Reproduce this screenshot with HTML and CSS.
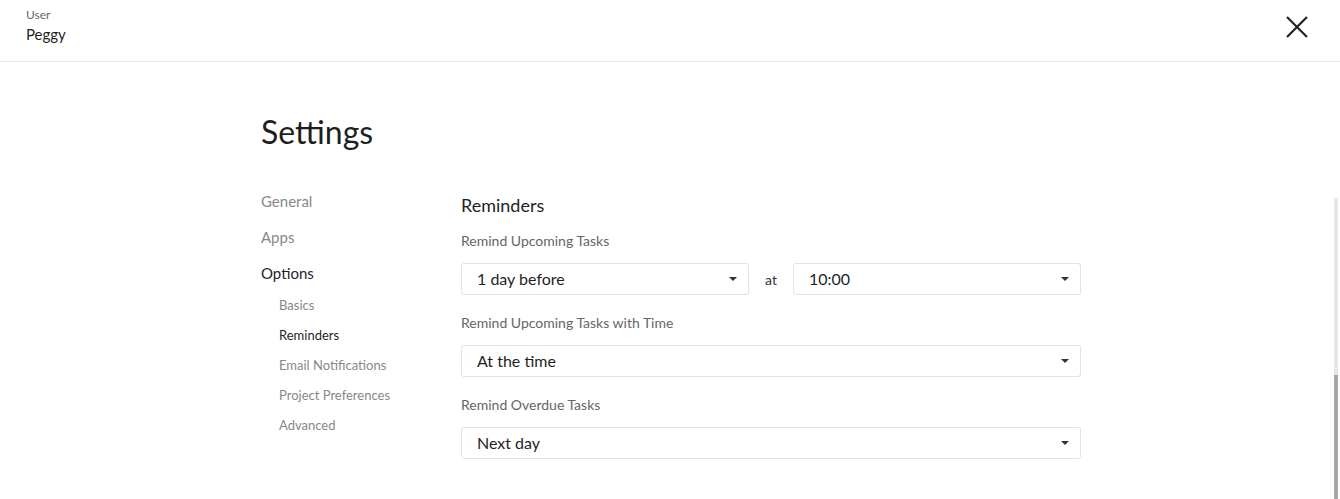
FILE: index.html
```html
<!DOCTYPE html>
<html>
<head>
<meta charset="utf-8">
<link rel="stylesheet" href="styles.css">
</head>
<body>
<header class="topbar">
  <div class="user">
    <div class="user-label">User</div>
    <div class="user-name">Peggy</div>
  </div>
  <button class="close" aria-label="Close">
    <svg width="24" height="24" viewBox="0 0 24 24"><path d="M2 2 L22 22 M22 2 L2 22" stroke="#222" stroke-width="2.2" fill="none"/></svg>
  </button>
</header>
<main class="page">
  <h1 class="title">Settings</h1>
  <div class="layout">
    <nav class="nav">
      <div class="nav-item">General</div>
      <div class="nav-item">Apps</div>
      <div class="nav-item active">Options</div>
      <div class="sub">
        <div class="sub-item">Basics</div>
        <div class="sub-item active">Reminders</div>
        <div class="sub-item">Email Notifications</div>
        <div class="sub-item">Project Preferences</div>
        <div class="sub-item">Advanced</div>
      </div>
    </nav>
    <section class="content">
      <h2 class="section-title">Reminders</h2>
      <div class="label">Remind Upcoming Tasks</div>
      <div class="row">
        <div class="select"><span>1 day before</span><i class="caret"></i></div>
        <span class="at">at</span>
        <div class="select"><span>10:00</span><i class="caret"></i></div>
      </div>
      <div class="label">Remind Upcoming Tasks with Time</div>
      <div class="row">
        <div class="select"><span>At the time</span><i class="caret"></i></div>
      </div>
      <div class="label">Remind Overdue Tasks</div>
      <div class="row">
        <div class="select"><span>Next day</span><i class="caret"></i></div>
      </div>
    </section>
  </div>
</main>
<div class="scrollbar"><div class="thumb"></div></div>
</body>
</html>
```
FILE: styles.css
```css
* { box-sizing: border-box; }
html, body { margin: 0; padding: 0; }
body {
  font-family: Lato, "Open Sans", sans-serif;
  color: #1f1f1f;
  background: #fff;
  width: 1340px;
  height: 499px;
  overflow: hidden;
}
.topbar {
  height: 62px;
  border-bottom: 1px solid #e8e8e8;
  display: flex;
  justify-content: space-between;
  align-items: flex-start;
  padding: 0 31px 0 26px;
}
.user { padding-top: 7px; }
.user-label { font-size: 12px; color: #666; line-height: 15px; }
.user-name { font-size: 15px; color: #1f1f1f; line-height: 22px; margin-top: 1px; }
.close {
  border: 0; background: none; padding: 0; margin-top: 15px; width: 24px; height: 24px; cursor: pointer;
}
.close svg { display: block; }
.page { padding-left: 261px; }
.title {
  font-size: 32px; font-weight: 400; margin: 0; padding-top: 50px; line-height: 40px; color: #1f1f1f;
}
.layout { display: flex; margin-top: 39px; }
.nav { width: 200px; }
.nav-item { font-size: 15px; color: #888; line-height: 20px; margin-bottom: 16px; }
.nav-item.active { color: #1f1f1f; margin-bottom: 13px; }
.sub { padding-left: 18px; }
.sub-item { font-size: 13px; color: #888; line-height: 18px; margin-bottom: 12px; }
.sub-item.active { color: #1f1f1f; }
.content { width: 620px; padding-top: 3px; }
.section-title { font-size: 18px; font-weight: 400; margin: 0; line-height: 22px; color: #1f1f1f; }
.label { font-size: 14px; color: #666; line-height: 18px; margin-top: 19px; }
.section-title + .label { margin-top: 16px; }
.row { display: flex; align-items: center; margin-top: 13px; }
.select {
  flex: 1; height: 32px; border: 1px solid #e2e2e2; border-radius: 3px;
  display: flex; align-items: center; justify-content: space-between;
  padding: 0 11px 2px 15px; font-size: 16px; color: #1f1f1f;
}
.caret { margin-top: 2px; }
.at { width: 44px; text-align: center; font-size: 14px; color: #333; }
.caret {
  width: 0; height: 0;
  border-left: 4px solid transparent; border-right: 4px solid transparent;
  border-top: 4px solid #333;
}
.scrollbar {
  position: absolute; right: 2px; top: 198px; width: 4px; height: 301px; background: #e6e6e6;
}
.thumb { position: absolute; left: 0; right: 0; bottom: 0; height: 124px; background: #a8a8a8; }
```
